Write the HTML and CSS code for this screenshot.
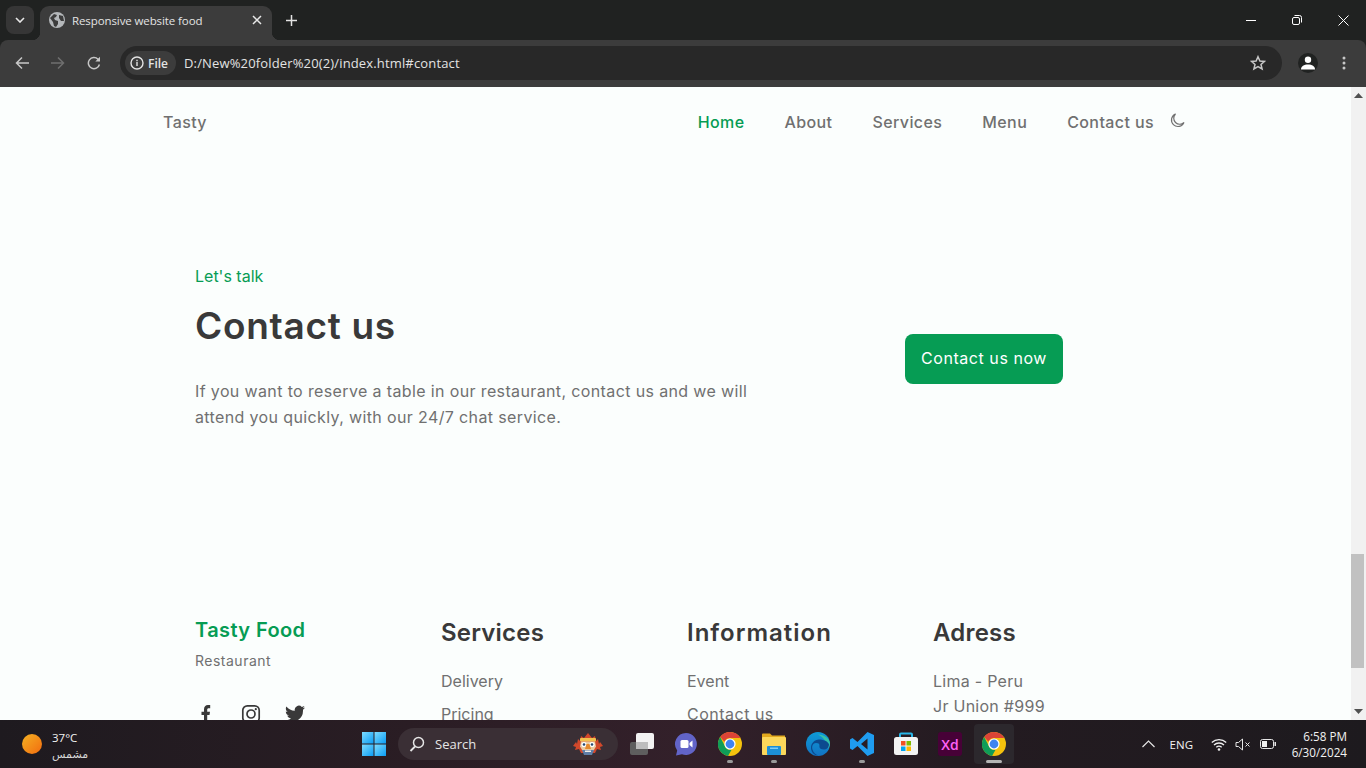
FILE: index.html
```html
<!DOCTYPE html>
<html lang="en">
<head>
  <meta charset="UTF-8">
  <title>Responsive website food</title>
  <link rel="stylesheet" href="styles.css">
</head>
<body>
  <div class="tabstrip">
    <div class="tab-search">
      <svg width="10" height="6" viewBox="0 0 10 6"><path d="M1 1l4 4 4-4" fill="none" stroke="#e8e8e8" stroke-width="1.6"/></svg>
    </div>
    <div class="tab">
      <svg class="globe" width="16" height="16" viewBox="0 0 16 16"><circle cx="8" cy="8" r="8" fill="#b4b7ba"/><path d="M1 6l4-4 3 1-1 2-2 1 1 2 3 1 0 3-2 3-2-1-1-4zM10 3l4 1 1 5-3 0-2-3z" fill="#3c3c3c"/></svg>
      <span class="tab-title">Responsive website food</span>
      <svg class="tab-close" width="10" height="10" viewBox="0 0 10 10"><path d="M1 1l8 8M9 1l-8 8" stroke="#e8e8e8" stroke-width="1.5"/></svg>
    </div>
    <svg class="new-tab" width="11" height="11" viewBox="0 0 11 11"><path d="M5.500 0v11M0 5.500h11" stroke="#e3e3e3" stroke-width="1.500"/></svg>
    <div class="win-btns">
      <svg width="10" height="10" viewBox="0 0 10 10"><path d="M0 5.500h10" stroke="#fff"/></svg>
      <svg width="10" height="10" viewBox="0 0 10 10"><rect x=".5" y="2.500" width="7" height="7" rx="1.500" fill="none" stroke="#fff"/><path d="M2.500 .5h5a2 2 0 0 1 2 2v5" fill="none" stroke="#fff"/></svg>
      <svg width="11" height="11" viewBox="0 0 11 11"><path d="M.5 .5l10 10M10.500 .5l-10 10" stroke="#fff"/></svg>
    </div>
  </div>

  <div class="toolbar">
    <svg class="tool-icon" width="14" height="14" viewBox="0 0 14 14"><path d="M14 7H2M7 1.500L1.500 7 7 12.500" fill="none" stroke="#c7c7c7" stroke-width="1.500"/></svg>
    <svg class="tool-icon" width="14" height="14" viewBox="0 0 14 14"><path d="M0 7h12M7 1.500L12.500 7 7 12.500" fill="none" stroke="#6f6f6f" stroke-width="1.500"/></svg>
    <svg class="tool-icon" width="14" height="14" viewBox="0 0 14 14"><path d="M12.400 8.500A5.600 5.600 0 1 1 11 3.200L12.500 4.800" fill="none" stroke="#c7c7c7" stroke-width="1.500"/><path d="M13 .8v4.700H8.300z" fill="#c7c7c7"/></svg>
    <div class="omnibox">
      <div class="chip">
        <svg width="14" height="14" viewBox="0 0 14 14"><circle cx="7" cy="7" r="6" fill="none" stroke="#e3e3e3" stroke-width="1.400"/><path d="M7 6v4M7 3.800v1.400" stroke="#e3e3e3" stroke-width="1.400"/></svg>
        <span>File</span>
      </div>
      <span class="url">D:/New%20folder%20(2)/index.html#contact</span>
      <svg class="star" width="16" height="16" viewBox="0 0 16 16"><path d="M8 1.700l1.900 4.300 4.600.4-3.500 3 1.100 4.600L8 11.600 3.900 14l1.100-4.600-3.500-3 4.600-.4z" fill="none" stroke="#c7c7c7" stroke-width="1.500"/></svg>
    </div>
    <div class="avatar">
      <svg width="14" height="14" viewBox="0 0 14 14"><circle cx="7" cy="3.800" r="3.200" fill="#fff"/><path d="M0 13.500c0-3.500 3-5 7-5s7 1.500 7 5z" fill="#fff"/></svg>
    </div>
    <svg class="kebab" width="4" height="14" viewBox="0 0 4 14"><circle cx="2" cy="2" r="1.500" fill="#c7c7c7"/><circle cx="2" cy="7" r="1.500" fill="#c7c7c7"/><circle cx="2" cy="12" r="1.500" fill="#c7c7c7"/></svg>
  </div>

  <div class="viewport">
    <div class="page">
      <nav class="nav">
        <a class="nav-logo">Tasty</a>
        <ul class="nav-list">
          <li class="nav-link active">Home</li>
          <li class="nav-link">About</li>
          <li class="nav-link">Services</li>
          <li class="nav-link">Menu</li>
          <li class="nav-link">Contact us</li>
        </ul>
        <svg class="moon" width="15" height="15" viewBox="0 0 15 15"><path d="M5.500 1A6.500 6.500 0 1 0 14 9.500 6 6 0 0 1 5.500 1z" fill="none" stroke="#707070" stroke-width="1.200"/></svg>
      </nav>

      <section class="contact">
        <div class="contact-text">
          <span class="subtitle">Let's talk</span>
          <h2 class="title">Contact us</h2>
          <p class="desc">If you want to reserve a table in our restaurant, contact us and we will attend you quickly, with our 24/7 chat service.</p>
        </div>
        <a class="button">Contact us now</a>
      </section>

      <footer class="footer">
        <div class="footer-col">
          <a class="footer-logo">Tasty Food</a>
          <span class="footer-sub">Restaurant</span>
          <div class="social">
            <svg width="22" height="22" viewBox="0 0 22 22"><path d="M9 21v-9H6.500V8.800H9V6.500C9 3.500 10.500 2 13 2h2.200v3.200h-1.500c-1.100 0-1.500.5-1.500 1.500v2.100h2.800l-.5 3.200h-2.300v9z" fill="#393939"/></svg>
            <svg width="22" height="22" viewBox="0 0 22 22"><rect x="2.800" y="2.800" width="16.400" height="16.400" rx="4.500" fill="none" stroke="#393939" stroke-width="1.700"/><circle cx="11" cy="11" r="4" fill="none" stroke="#393939" stroke-width="1.700"/><circle cx="15.800" cy="6.200" r="1.100" fill="#393939"/></svg>
            <svg width="22" height="22" viewBox="0 0 22 22"><path d="M21 4.600c-.7.300-1.500.6-2.400.7.900-.5 1.500-1.300 1.800-2.300-.8.500-1.700.8-2.600 1A4.100 4.100 0 0 0 10.800 7.700C7.400 7.500 4.400 5.900 2.400 3.400c-1.100 1.900-.6 4.300 1.300 5.500-.7 0-1.300-.2-1.900-.5 0 2 1.400 3.700 3.300 4.100-.6.200-1.200.2-1.900.1.500 1.600 2 2.800 3.800 2.800A8.300 8.300 0 0 1 1 17.100 11.600 11.600 0 0 0 19 6.800c.8-.6 1.500-1.300 2-2.200z" fill="#393939"/></svg>
          </div>
        </div>
        <div class="footer-col">
          <h3 class="footer-title">Services</h3>
          <ul class="footer-links">
            <li>Delivery</li>
            <li>Pricing</li>
          </ul>
        </div>
        <div class="footer-col">
          <h3 class="footer-title wide">Information</h3>
          <ul class="footer-links">
            <li>Event</li>
            <li class="wide-link">Contact us</li>
          </ul>
        </div>
        <div class="footer-col">
          <h3 class="footer-title">Adress</h3>
          <ul class="footer-address">
            <li>Lima - Peru</li>
            <li>Jr Union #999</li>
          </ul>
        </div>
      </footer>
    </div>
    <div class="scrollbar">
      <svg class="arrow" width="9" height="5" viewBox="0 0 9 5"><path d="M4.500 0L9 5H0z" fill="#505050"/></svg>
      <div class="thumb"></div>
      <svg class="arrow arrow-down" width="9" height="5" viewBox="0 0 9 5"><path d="M0 0h9L4.500 5z" fill="#505050"/></svg>
    </div>
  </div>

  <div class="taskbar">
    <div class="weather">
      <div class="sun"></div>
      <div class="weather-text">
        <span class="temp">37°C</span>
        <span class="cond" lang="ar">مشمس</span>
      </div>
    </div>
    <svg class="start" width="24" height="24" viewBox="0 0 24 24">
      <defs><linearGradient id="win" x1="0" y1="0" x2="1" y2="1"><stop offset="0" stop-color="#7ddcff"/><stop offset="1" stop-color="#0a9cf5"/></linearGradient></defs>
      <rect width="11.500" height="11.500" fill="url(#win)"/><rect x="12.500" width="11.500" height="11.500" fill="url(#win)"/><rect y="12.500" width="11.500" height="11.500" fill="url(#win)"/><rect x="12.500" y="12.500" width="11.500" height="11.500" fill="url(#win)"/>
    </svg>
    <div class="search">
      <svg width="16" height="16" viewBox="0 0 16 16"><circle cx="9.500" cy="6.500" r="5" fill="none" stroke="#e6e6e6" stroke-width="1.500"/><path d="M6 10.500L1.500 15" stroke="#e6e6e6" stroke-width="1.800"/></svg>
      <span>Search</span>
      <svg class="mask" width="30" height="24" viewBox="0 0 30 24">
        <path d="M0 14l3-4 1 2 1-5 2 2 1-5 3 2 4-5 4 5 3-2 1 5 2-2 1 5 1-2 3 4-3 1 1 3-4-1-2 4H8l-2-4-4 1 1-3z" fill="#d2482b"/>
        <rect x="7" y="6" width="16" height="3.500" rx="1" fill="#f2c14e"/>
        <path d="M8 9.500h14l1 5-3 5H10l-3-5z" fill="#e9c9a0"/>
        <circle cx="11" cy="12.500" r="2.600" fill="#fff"/><circle cx="19" cy="12.500" r="2.600" fill="#fff"/>
        <circle cx="11" cy="12.500" r="1.300" fill="#27496d"/><circle cx="19" cy="12.500" r="1.300" fill="#27496d"/>
        <path d="M13.500 12h3l1.500 5h-6z" fill="#e58a2e"/>
        <path d="M9 18h12l-2 5h-8z" fill="#5f7fa6"/>
        <path d="M12 18.500h6v1.500h-6z" fill="#f4f0e6"/>
      </svg>
    </div>
    <div class="apps">
      <div class="app">
        <svg width="24" height="24" viewBox="0 0 24 24"><rect x="0" y="10" width="18" height="13" rx="2" fill="#5e5e5e"/><rect x="6" y="1" width="18" height="16" rx="2" fill="#f2f2f2"/><rect x="6" y="10" width="12" height="7" fill="#bdbdbd"/></svg>
      </div>
      <div class="app">
        <svg width="24" height="24" viewBox="0 0 24 24"><path d="M12 1a11 11 0 1 1-4 21.300L2 23.500l1.200-5A11 11 0 0 1 12 1z" fill="#6264c8"/><rect x="6.500" y="8" width="8" height="8" rx="1.500" fill="#fff"/><path d="M15.500 11l3-2.500v7l-3-2.500z" fill="#fff"/></svg>
      </div>
      <div class="app running">
        <svg class="chrome" width="24" height="24" viewBox="0 0 24 24"><use href="#chrome-logo"/></svg>
      </div>
      <div class="app running">
        <svg width="24" height="24" viewBox="0 0 24 24"><path d="M0 2.500A1 1 0 0 1 1 1.500h7l2 2h13v19H1a1 1 0 0 1-1-1z" fill="#e2a91e"/><rect y="5" width="24" height="18" rx="1" fill="#fbd75b"/><rect x="5" y="14" width="14" height="9" rx="1" fill="#1c8fd6"/><rect x="8" y="15.500" width="8" height="1.500" fill="#7fcdf5"/></svg>
      </div>
      <div class="app">
        <svg width="24" height="24" viewBox="0 0 24 24">
          <defs><linearGradient id="edge" x1="0" y1="0" x2="0" y2="1"><stop offset="0" stop-color="#0e9ad6"/><stop offset="1" stop-color="#1273c4"/></linearGradient></defs>
          <circle cx="12" cy="12" r="12" fill="url(#edge)"/>
          <path d="M12 2.500c6 0 11.500 3.500 12 9-.3 3-1.500 4.500-2.500 5 .5-6-4-11-9.500-14z" fill="#35c1a8"/>
          <path d="M23 12.500c0 3-2.500 5-5 5-3.500 0-5-1.800-4.600-3.800.3-1.300-.4-2.700-3.400-2.700-3 0-4.500 3-3.500 6.500.8 3 3.500 5.500 6 6-4 .3-7-3-7.500-7-.4-5 3.500-9 8-9 5.500 0 9.500 2.500 10 5z" fill="#0c4a8f"/>
        </svg>
      </div>
      <div class="app running">
        <svg width="24" height="24" viewBox="0 0 24 24"><path d="M17.500 0L24 3v18l-6.500 3L7.500 14 2.500 18 0 16.500V7.500L2.500 6l5 4zM17.500 6.500L11 12l6.500 5.500z" fill="#1f9cf0"/></svg>
      </div>
      <div class="app">
        <svg width="24" height="24" viewBox="0 0 24 24"><path d="M6 5V2.500a1 1 0 0 1 1-1h10a1 1 0 0 1 1 1V5" fill="none" stroke="#29b6e8" stroke-width="2"/><rect y="5" width="24" height="18" rx="2.500" fill="#f3f3f3"/><rect x="7" y="9" width="4.500" height="4.500" fill="#f25022"/><rect x="12.500" y="9" width="4.500" height="4.500" fill="#7fba00"/><rect x="7" y="14.500" width="4.500" height="4.500" fill="#00a4ef"/><rect x="12.500" y="14.500" width="4.500" height="4.500" fill="#ffb900"/></svg>
      </div>
      <div class="app">
        <div class="xd">Xd</div>
      </div>
      <div class="app active">
        <svg class="chrome" width="24" height="24" viewBox="0 0 24 24">
          <defs>
            <g id="chrome-logo">
              <circle cx="12" cy="12" r="12" fill="#f4c20d"/>
              <path d="M12 0a12 12 0 0 1 10.400 6H12a6 6 0 0 0-5.600 3.800L2.200 5.100A12 12 0 0 1 12 0z" fill="#db4437"/>
              <path d="M2.200 5.100l4.900 9.500a6 6 0 0 0 6.500 3.200L10 24A12 12 0 0 1 2.200 5.100z" fill="#0f9d58"/>
              <circle cx="12" cy="12" r="5.600" fill="#fff"/>
              <circle cx="12" cy="12" r="4.400" fill="#3f83f0"/>
            </g>
          </defs>
          <use href="#chrome-logo"/>
        </svg>
      </div>
    </div>
    <div class="tray">
      <svg class="tray-up" width="13" height="8" viewBox="0 0 13 8"><path d="M.5 7l6-6 6 6" fill="none" stroke="#e6e6e6" stroke-width="1.200"/></svg>
      <span class="lang">ENG</span>
      <svg class="wifi" width="16" height="13" viewBox="0 0 16 13"><path d="M.8 4.500a10.500 10.500 0 0 1 14.400 0M3 7a7.300 7.300 0 0 1 10 0M5.300 9.300a4 4 0 0 1 5.400 0" fill="none" stroke="#f0f0f0" stroke-width="1.300"/><circle cx="8" cy="11.500" r="1.300" fill="#f0f0f0"/></svg>
      <svg class="mute" width="16" height="13" viewBox="0 0 16 13"><path d="M1 4.500h2.500L7.500 1v11L3.500 8.500H1z" fill="none" stroke="#e6e6e6"/><path d="M10.500 4.500l4 4M14.500 4.500l-4 4" stroke="#e6e6e6"/></svg>
      <svg class="batt" width="16" height="10" viewBox="0 0 16 10"><rect x=".5" y=".5" width="13" height="9" rx="2" fill="none" stroke="#e6e6e6"/><rect x="2" y="2" width="5" height="6" fill="#f0f0f0"/><rect x="14.500" y="3" width="1.500" height="4" fill="#e6e6e6"/></svg>
      <div class="clock">
        <span>6:58 PM</span>
        <span>6/30/2024</span>
      </div>
    </div>
  </div>
</body>
</html>
```

FILE: styles.css
```css
* {
  margin: 0;
  padding: 0;
  box-sizing: border-box;
}
html, body {
  width: 100%;
  height: 100%;
  overflow: hidden;
}
body {
  display: flex;
  flex-direction: column;
  font-family: "Inter", "Liberation Sans", sans-serif;
  background: #202221;
}
ul {
  list-style: none;
}

/* browser chrome */
.tabstrip {
  height: 40px;
  flex: none;
  display: flex;
  align-items: flex-start;
  padding: 6px 0 0 6px;
  background: #202221;
}
.tab-search {
  width: 28px;
  height: 28px;
  display: flex;
  align-items: center;
  justify-content: center;
  border-radius: 8px;
  background: #363636;
}
.tab {
  position: relative;
  width: 232px;
  height: 34px;
  margin-left: 6px;
  display: flex;
  align-items: center;
  padding: 0 10px 6px 9px;
  border-radius: 9px 9px 0 0;
  background: #3c3c3c;
}
/* the small flares at the foot of the tab */
.tab::before,
.tab::after {
  content: "";
  position: absolute;
  bottom: 0;
  width: 8px;
  height: 8px;
}
.tab::before {
  left: -8px;
  background: radial-gradient(circle at 0 0, transparent 8px, #3c3c3c 8.5px);
}
.tab::after {
  right: -8px;
  background: radial-gradient(circle at 100% 0, transparent 8px, #3c3c3c 8.5px);
}
.tab-title {
  margin-left: 7px;
  flex: 1;
  font-family: "Open Sans", sans-serif;
  font-size: 11.5px;
  letter-spacing: -0.1px;
  color: #e3e3e3;
}
.new-tab {
  margin: 9px 0 0 14px;
}
.win-btns {
  margin-left: auto;
  width: 138px;
  height: 28px;
  display: flex;
  align-items: center;
  justify-content: space-between;
  padding: 0 17px 0 18px;
}
.toolbar {
  height: 47px;
  flex: none;
  display: flex;
  align-items: center;
  padding: 0 0 1px 15px;
  border-radius: 8px 8px 0 0;
  background: #3c3c3c;
}
.tool-icon {
  margin-right: 22px;
}
.omnibox {
  width: 1162px;
  height: 34px;
  margin-left: -3px;
  display: flex;
  align-items: center;
  padding: 0 16px 0 5px;
  border-radius: 17px;
  background: #282828;
  color: #e3e3e3;
}
.chip {
  width: 51px;
  height: 24px;
  display: flex;
  align-items: center;
  gap: 4px;
  padding-left: 5px;
  border-radius: 12px;
  background: #3c3c3c;
  font-family: "Open Sans", sans-serif;
  font-size: 12px;
  font-weight: 600;
}
.url {
  margin-left: 8px;
  font-family: "Open Sans", sans-serif;
  font-size: 13px;
  letter-spacing: 0.15px;
}
.star {
  margin-left: auto;
}
.avatar {
  width: 20px;
  height: 20px;
  margin-left: 16px;
  display: flex;
  align-items: center;
  justify-content: center;
  border-radius: 50%;
  background: #202221;
}
.kebab {
  margin-left: 24px;
}

/* page */
.viewport {
  height: 633px;
  flex: none;
  display: flex;
  overflow: hidden;
}
.page {
  flex: 1;
  min-width: 0;
  background: #fbfefd;
  color: #707070;
}
.scrollbar {
  width: 15px;
  flex: none;
  display: flex;
  flex-direction: column;
  align-items: center;
  padding-top: 6px;
  background: #f1f1f1;
}
.arrow-down {
  margin-top: 41px;
}
.thumb {
  width: 13px;
  height: 114px;
  margin-top: 456px;
  background: #c1c1c1;
  align-self: flex-start;
}

.nav {
  height: 70px;
  display: flex;
  align-items: center;
  padding: 0 166px 0 163px;
  font-size: 16px;
  font-weight: 450;
  letter-spacing: 0.4px;
}
.nav-list {
  margin-left: auto;
  display: flex;
  gap: 40px;
}
.nav-link.active {
  color: #069c54;
}
.moon {
  margin: -3px 0 0 16px;
}

.contact {
  width: 960px;
  margin: 109px 0 0 195px;
  display: grid;
  grid-template-columns: 586px 342px;
  column-gap: 32px;
  align-items: center;
}
.contact-text {
  padding-bottom: 22px;
}
.subtitle {
  display: block;
  font-size: 16px;
  line-height: 20px;
  color: #069c54;
}
.title {
  margin-top: 18px;
  font-size: 37px;
  line-height: 44px;
  font-weight: 600;
  letter-spacing: 0.7px;
  color: #393939;
}
.desc {
  margin-top: 30px;
  font-size: 16px;
  line-height: 26px;
  letter-spacing: 0.37px;
}
.button {
  justify-self: center;
  width: 158px;
  height: 50px;
  display: flex;
  align-items: center;
  justify-content: center;
  padding-bottom: 2px;
  border-radius: 8px;
  background: #069c54;
  color: #fff;
  font-size: 16px;
  letter-spacing: 0.55px;
}

.footer {
  width: 960px;
  margin: 165px 0 0 195px;
  display: grid;
  grid-template-columns: repeat(4, 214px);
  column-gap: 32px;
}
.footer-logo {
  display: block;
  font-size: 20px;
  line-height: 26px;
  font-weight: 600;
  letter-spacing: 0.4px;
  color: #069c54;
}
.footer-sub {
  display: block;
  margin-top: 8px;
  font-size: 14px;
  line-height: 20px;
  letter-spacing: 0.5px;
}
.social {
  margin-top: 32px;
  display: flex;
  gap: 22.5px;
}
.footer-title {
  font-size: 24px;
  line-height: 32px;
  font-weight: 600;
  letter-spacing: 0.2px;
  color: #393939;
}
.footer-title.wide {
  letter-spacing: 1px;
}
.footer-links {
  margin-top: 20px;
  font-size: 16px;
  line-height: 24px;
}
.footer-links li + li {
  margin-top: 9px;
}
.footer-links .wide-link {
  letter-spacing: 0.5px;
}
.footer-address {
  margin-top: 20px;
  font-size: 16px;
  line-height: 25px;
  letter-spacing: 0.27px;
}

/* windows taskbar */
.taskbar {
  height: 48px;
  flex: none;
  display: flex;
  align-items: center;
  background: linear-gradient(90deg, #1e1a1f 0%, #2a1d24 30%, #33202a 50%, #241b21 70%, #1d1a1e 100%);
  color: #f2f2f2;
}
.weather {
  width: 362px;
  flex: none;
  display: flex;
  align-items: center;
  padding-left: 22px;
}
.sun {
  width: 20px;
  height: 20px;
  border-radius: 50%;
  background: linear-gradient(135deg, #f4b223, #f26b0f);
}
.weather-text {
  margin-left: 10px;
  display: flex;
  flex-direction: column;
  font-family: "Open Sans", sans-serif;
}
.temp {
  padding-top: 2px;
  font-size: 11.5px;
  font-weight: 500;
  line-height: 18px;
}
.cond {
  font-family: "Noto Sans", "DejaVu Sans", sans-serif;
  font-size: 11px;
  line-height: 14px;
  color: #d6d6d6;
}
.start {
  flex: none;
}
.search {
  width: 220px;
  height: 32px;
  margin-left: 12px;
  display: flex;
  align-items: center;
  padding-left: 11px;
  border-radius: 16px;
  background: #3a2f35;
  font-family: "Open Sans", sans-serif;
  font-size: 13px;
  color: #e6e6e6;
}
.search span {
  margin-left: 10px;
}
.mask {
  margin-left: auto;
  margin-right: 15px;
}
.apps {
  margin-left: 2px;
  display: flex;
}
.app {
  position: relative;
  width: 44px;
  height: 40px;
  display: flex;
  align-items: center;
  justify-content: center;
}
.app.running::after,
.app.active::after {
  content: "";
  position: absolute;
  bottom: 1px;
  left: 19px;
  width: 6px;
  height: 3px;
  border-radius: 2px;
  background: #9a9a9a;
}
.app.active {
  width: 40px;
  margin-left: 2px;
  border-radius: 4px;
  background: #2c282d;
}
.app.active::after {
  left: 12px;
  width: 16px;
  background: #b5b5b5;
}
.xd {
  width: 24px;
  height: 24px;
  display: flex;
  align-items: center;
  justify-content: center;
  border-radius: 3px;
  background: #470137;
  color: #ff61f6;
  font-family: "Open Sans", sans-serif;
  font-size: 14px;
  font-weight: 600;
}
.tray {
  margin-left: auto;
  display: flex;
  align-items: center;
  padding-right: 19px;
}
.lang {
  margin-left: 15px;
  font-family: "Open Sans", sans-serif;
  font-size: 11.5px;
  font-weight: 500;
}
.wifi {
  margin-left: 18px;
}
.mute {
  margin-left: 8px;
}
.batt {
  margin-left: 9px;
}
.clock {
  width: 70px;
  margin-left: 1px;
  display: flex;
  flex-direction: column;
  align-items: flex-end;
  font-family: "Open Sans", sans-serif;
  font-size: 11.7px;
  line-height: 16px;
}
```
